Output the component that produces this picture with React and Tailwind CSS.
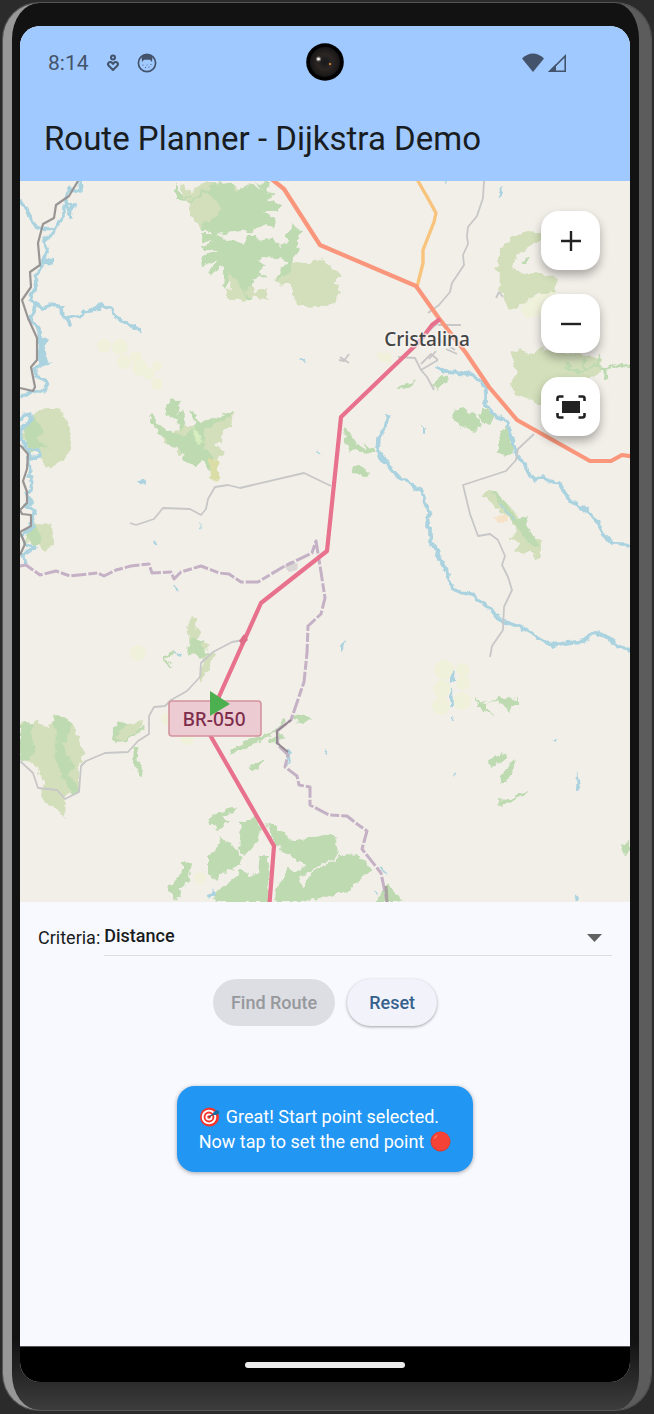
import { useState } from "react";

const FOREST = [
  "M175 182L182 198L196 196L204 192L213 183L232 184L240 200L236 208L243 215L237 225L226 231L215 228L205 231L202 223L214 219L222 210L214 199L206 193L193 197L185 200L175 198Z",
  "M236 190L250 184L262 190L256 183L271 182L265 190L274 194L268 200L280 206L280 211L263 211L274 219L275 226L264 224L250 231L234 233L214 235L200 229L206 222L222 222L235 210L238 199Z",
  "M202 234L214 234L222 237L225 240L235 239L244 246L249 235L256 235L258 240L271 238L281 246L288 241L285 234L293 225L298 230L304 231L297 236L297 245L300 250L293 259L289 274L274 282L288 262L277 258L263 257L259 261L265 267L259 270L265 277L252 279L248 292L240 284L231 270L225 290L222 285L224 269L220 266L211 275L209 273L217 260L202 266L200 258L218 251L203 250L202 246L215 241L203 242Z",
  "M165 406L171 398L180 403L177 414L182 410L186 416L181 432L177 419L167 416Z",
  "M148 417L152 414L157 424L172 432L187 437L191 430L196 424L189 409L194 412L199 423L233 411L230 417L203 429L203 445L213 458L211 475L202 461L196 466L184 460L180 450L170 445L158 431Z",
  "M24 427L34 417L45 432L35 439L51 449L38 446L28 455Z",
  "M25 535L35 525L42 539L36 548Z",
  "M52 720L58 715L71 723L69 739L61 744L75 764L69 774L80 793L73 795L62 777L55 757L57 736Z",
  "M20 724L35 723L30 733L36 747L29 759L20 762Z",
  "M112 728L119 722L129 724L116 736L123 740L114 741Z",
  "M188 644L193 637L206 641L199 647L209 653L200 660L194 652L187 654Z",
  "M162 656L170 651L176 652L166 658L174 668L171 668Z",
  "M134 745L140 748L136 757L143 770L141 777L133 765Z",
  "M451 412L462 407L483 422L473 432L457 424Z",
  "M479 415L487 409L495 417L488 426Z",
  "M499 437L507 425L514 451L505 456L497 453Z",
  "M343 431L346 428L359 446L366 450L364 443L375 452L360 453L355 448L350 453Z",
  "M352 468L357 466L368 471L365 475L353 473Z",
  "M397 388L407 384L417 380L409 388L398 389Z",
  "M434 383L441 376L449 377L437 389Z",
  "M490 491L499 494L507 505L516 518L529 516L526 525L540 546L529 544L510 518Z",
  "M476 696L480 703L486 700L482 705L494 700L498 696L514 700L519 698L519 705L510 705L511 712L507 709L499 700L484 704L495 717L487 711L477 707Z",
  "M488 759L499 757L502 752L508 755L504 761L496 764L491 768Z",
  "M516 759L513 770L506 784L499 784L505 768Z",
  "M498 799L511 800L527 790L528 792L510 804L500 806Z",
  "M621 844L630 841L630 850L624 856Z",
  "M208 820L216 813L240 807L223 817L229 822L218 831Z",
  "M241 823L253 816L258 821L261 837L247 855L239 850Z",
  "M208 855L216 852L221 836L232 845L243 859L236 868L225 871L216 881L208 872Z",
  "M216 892L232 881L240 869L247 871L250 877L258 874L260 855L269 855L268 902L213 902Z",
  "M266 822L296 841L334 833L339 855L317 867L309 872L299 878L309 898L293 902L274 900L275 891L289 870L297 872L307 867L276 847Z",
  "M311 872L345 854L361 855L373 870L357 880L349 891L330 895L301 902L276 902L276 895L302 892Z",
  "M170 886L176 879L182 872L182 863L188 860L192 865L187 883L179 890L181 897L175 901L168 887Z",
  "M377 896L389 884L397 896L403 902L377 902Z",
  "M229 750L245 742L262 736L265 733L268 737L250 746L230 755Z",
  "M248 767L255 763L263 760L257 770L250 768Z",
  "M290 718L300 715L311 718L304 723L293 720Z",
  "M268 740L280 733L285 738L270 743Z",
];

const SCRUB = [
  "M182 183L191 194L204 181L222 184L226 189L235 185L243 198L241 211L251 214L255 222L240 223L225 230L202 230L191 216L190 204L180 197Z",
  "M222 240L229 246L236 263L248 284L255 293L265 286L269 300L253 295L245 301L227 298L226 289L232 288L224 270Z",
  "M292 262L309 263L320 259L342 275L334 282L341 292L333 305L305 307L295 301L290 284L275 283L274 279Z",
  "M500 249L514 236L533 231L541 234L540 240L518 253L510 267L525 275L537 272L557 278L555 292L539 295L522 302L518 310L509 309L499 290L501 280L497 270Z",
  "M509 354L519 348L528 354L541 349L563 352L600 358L601 371L590 378L551 407L527 399L511 389L510 381L518 374Z",
  "M38 410L57 408L65 415L70 431L71 450L64 460L47 468L41 458L30 444L21 437L27 424Z",
  "M30 526L41 523L52 525L53 543L45 552L36 545L24 541Z",
  "M162 436L184 427L202 427L233 412L231 426L223 430L222 442L214 444L225 452L210 464L203 462L193 452L178 455L178 446L164 443Z",
  "M20 723L25 722L30 724L37 720L50 728L53 716L63 717L72 724L76 732L81 743L84 754L79 764L79 788L64 797L65 817L54 808L41 797L42 789L44 783L36 766L20 755Z",
  "M114 731L128 724L143 720L138 732L123 742L112 738Z",
  "M186 627L191 617L197 618L195 625L201 633L195 642L204 641L208 647L204 654L216 654L201 683L199 677L203 659L190 652Z",
  "M480 495L490 489L495 490L497 500L512 507L520 522L528 531L532 542L541 540L541 551L537 561L530 551L515 553L519 542L510 538L518 532L509 517L500 512L492 502Z",
];

const FARM = [
  [104, 346, 7], [120, 347, 8], [124, 362, 7], [136, 357, 6], [140, 368, 8], [149, 374, 6],
  [157, 366, 5], [157, 384, 6], [138, 653, 8], [444, 670, 10], [463, 670, 7], [442, 689, 9],
  [463, 683, 7], [441, 706, 9], [462, 701, 9], [200, 878, 6], [187, 738, 7], [167, 719, 6],
];

const RIVERS = [
  "M80 181L81 192L70 190L65 202L73 205L71 217L67 205L63 208L63 217L55 228L54 234L44 241L47 252L42 266L35 276L36 285L30 300L36 304L31 317L40 333L42 349L46 362L34 369L37 377L47 383L43 391L31 391L20 397",
  "M20 200L27 209L29 216L37 228L56 229",
  "M33 303L42 308L50 305L62 307L63 317L70 324L66 318L83 315L84 311L98 309L103 304L111 309L116 317L129 324L142 332",
  "M20 420L24 415L31 416L28 424L20 428L21 437L27 448L38 451L39 456L31 459L27 452L30 469L27 476L32 477L31 490L27 492L32 502L25 506L35 511L31 523L33 529L21 534L25 544L35 546L29 552L22 553L26 565",
  "M389 414L387 425L379 438L378 452L385 462L399 477L409 480L415 489L420 490L425 503L429 512L427 524L430 531L430 543L436 547L440 560L448 575L452 589L459 592L475 596L481 603L491 608L501 621L521 627L540 638L552 645L566 643L584 641L594 632L605 636L620 647L630 649",
  "M436 366L444 372L456 373L470 374L482 380L486 392L486 406L496 416L508 423L512 439L517 456L526 466L533 480L543 477L551 482L560 484L567 497L576 504L588 511L598 522L604 535L612 544L626 544L630 548",
];

const PONDS = [
  "M54 257L50 259L47 257L43 267L54 264Z", "M39 334L48 340L43 349L44 361L52 364L38 365Z",
  "M497 199L500 190L504 187L503 192Z", "M299 359L305 359L307 362L301 361Z", "M341 647L346 640L344 650L341 652Z",
  "M422 426L425 427L425 434L422 433Z", "M449 681L455 668L454 681L450 683Z", "M450 706L450 693L453 687L454 706Z",
  "M451 714L454 720L451 720Z", "M576 790L577 771L580 788L578 791Z", "M138 479L143 478L145 486L141 484Z",
  "M208 898L213 889L215 893L211 899Z", "M285 753L288 748L292 753L286 767Z", "M574 894L581 902L576 902Z",
  "M552 740L556 739L556 742Z", "M452 774L456 772L452 777Z", "M198 526L201 524L199 529Z", "M154 540L158 543L155 545Z",
  "M324 753L326 749L326 754Z", "M317 449L321 455L318 454Z",
];

const MINOR = [
  "M484 181L483 198L477 216L468 227L467 236L468 244L463 255L464 265L452 283L450 292L439 305L428 313",
  "M534 434L518 449L516 460L506 471L463 485L470 514L478 536L490 534L498 540L505 556L502 565L508 577L512 590L504 607L503 630L492 646L490 657",
  "M130 523L136 525L154 519L163 508L190 509L201 515L206 509L208 499L215 487L228 485L240 488L304 473L331 486",
  "M243 640L232 642L213 652L201 663L200 677L187 691L171 700L165 706L154 707L149 716L149 734L138 741L128 752L105 753L86 761L81 766L79 792L65 799L57 790L38 788L33 773L20 761",
];

const STREETS = [
  "M398 357L415 358L421 370L427 377L434 390M421 364L431 354L438 360M421 370L438 360M429 359L436 351M438 339L455 350M446 349L457 354M438 325L461 325M426 333L438 323",
];

function MapCanvas() {
  return (
    <svg
      className="block h-full w-full"
      viewBox="20 181 610 721"
      preserveAspectRatio="xMidYMid slice"
      role="img"
      aria-label="Map around Cristalina"
    >
      <defs>
        <filter id="terrain" filterUnits="userSpaceOnUse" x="10" y="171" width="630" height="741">
          <feTurbulence type="fractalNoise" baseFrequency="0.14" numOctaves="2" seed="4" result="noise" />
          <feDisplacementMap in="SourceGraphic" in2="noise" scale="8" xChannelSelector="R" yChannelSelector="G" />
          <feGaussianBlur stdDeviation="0.6" />
        </filter>
        <filter id="water" filterUnits="userSpaceOnUse" x="10" y="171" width="630" height="741">
          <feTurbulence type="fractalNoise" baseFrequency="0.12" numOctaves="2" seed="9" result="noise" />
          <feDisplacementMap in="SourceGraphic" in2="noise" scale="7" xChannelSelector="R" yChannelSelector="G" />
          <feGaussianBlur stdDeviation="0.5" />
        </filter>
        <filter id="soft" filterUnits="userSpaceOnUse" x="10" y="171" width="630" height="741">
          <feGaussianBlur stdDeviation="0.5" />
        </filter>
      </defs>
      <rect x="20" y="181" width="610" height="721" fill="#f2efe9" />
      <g fill="#eff1db" filter="url(#soft)">
        {FARM.map(([x, y, r]) => <circle key={`${x}-${y}`} cx={x} cy={y} r={r} />)}
        <path d="M523 302L540 294L556 290L560 312L526 318L520 310ZM376 353L391 353L392 364L380 361Z" />
      </g>
      <g filter="url(#terrain)">
        <g fill="#d3dfbb">{SCRUB.map((d) => <path key={d} d={d} />)}</g>
        <g fill="#bedab1">{FOREST.map((d) => <path key={d} d={d} />)}</g>
        <path d="M520 262L532 257L530 260L523 264Z" fill="#bedab1" />
        <path d="M193 428L198 430L202 442L196 444Z" fill="#d5edbf" />
        <path d="M210 458L219 459L219 480L210 479Z" fill="#dbdda6" />
        <path d="M494 516L508 516L508 521L498 523Z" fill="#f5e2c8" />
        <g fill="none" stroke="#bedab1" strokeWidth="2.5" strokeLinejoin="round">
          <path d="M630 367L617 364L608 369L595 366L580 372L565 367M570 370L567 361M585 370L582 360M596 366L600 354M605 367L606 380" />
          <path d="M125 741L138 732L143 727M134 747L137 760M278 735L276 742M285 720L276 730L268 736" strokeWidth="2" />
          <path d="M230 270L240 284L250 300M205 190L190 202M236 201L220 212" strokeWidth="2" />
        </g>
      </g>
      <g filter="url(#water)">
        <g fill="#aad3df">{PONDS.map((d) => <path key={d} d={d} />)}</g>
        <g fill="none" stroke="#aad3df" strokeWidth="3.6" strokeLinejoin="round">
          {RIVERS.map((d) => <path key={d} d={d} />)}
          <path d="M446 181L446 186M500 503L514 519M173 652L182 655M174 586L176 590M375 891L377 895M381 867L387 874" strokeWidth="1.5" />
        </g>
      </g>
      <g filter="url(#soft)">
        <g fill="none" stroke="#999594" strokeWidth="2.2" strokeLinejoin="round">
          <path d="M78 181L69 196L56 205L54 218L43 224L38 243L40 265L30 272L31 287L22 300L28 318L37 338L37 360L31 367L35 387L33 391L20 388" />
          <path d="M20 445L28 454L27 469L23 481L27 492L27 503L20 510L22 514L31 515L31 526L20 532L25 544L20 555" />
        </g>
        <g fill="none" stroke="#c8c7c7" strokeWidth="1.8" strokeLinejoin="round">
          {MINOR.map((d) => <path key={d} d={d} />)}
          {STREETS.map((d) => <path key={d} d={d} />)}
          <path d="M339 360L344 361L349 354M340 357L349 363M496 298L499 292L503 297" />
        </g>
        <path d="M284 566L290 561L298 564L297 570L289 572Z" fill="#d9d6d4" />
        <g fill="none" stroke="#c5b1c5" strokeWidth="3" strokeLinejoin="round">
          <path d="M20 566L26 565L40 575L56 571L70 576L98 573L104 576L116 570L131 566L149 564L152 573L171 572L174 579L181 572L201 566L219 573L229 574L241 582L258 582L283 567L312 553L316 541L321 572L325 598L321 614L308 626L307 653L304 682L291 720L277 731L278 745L288 755L285 767L297 776L299 785L310 787L310 805L329 815L347 816L357 824L367 831L362 849L381 873L387 902" strokeDasharray="15 2 9 2" />
          <path d="M291 720L277 731L277 743L288 752" stroke="#93888f" strokeWidth="2" />
          <path d="M386 886L387 902" stroke="#a8a39f" />
        </g>
        <g fill="none" strokeLinejoin="round">
          <path d="M418 175L418 181L430 202L436 213L434 222L423 250L423 263L420 275L417 287" stroke="#f8c47d" strokeWidth="3.4" />
          <path d="M266 175L274 181L284 189L320 245L416 286L438 317L466 353L489 387L517 420L590 461L611 461L622 455L636 457" stroke="#f9967b" strokeWidth="4.2" />
          <path d="M440 319L432 325L420 341L341 417L327 551L261 603L213 710L210 735L274 846L269 910" stroke="#e8718d" strokeWidth="4.2" />
        </g>
        <path d="M244 634L248 640L242 645L239 641Z" fill="#de6d88" />
      </g>
      <text x="427" y="346" textAnchor="middle" fontFamily="Noto Sans, sans-serif" fontSize="19" fontWeight="500" fill="#444" stroke="#f7f5f2" strokeOpacity="0.75" strokeWidth="3" paintOrder="stroke">Cristalina</text>
      <rect x="169" y="701" width="92" height="35" rx="3" fill="#eccbd2" stroke="#d4949f" strokeWidth="1.6" />
      <text x="214" y="726" textAnchor="middle" fontFamily="Noto Sans, sans-serif" fontSize="19" fontWeight="500" fill="#7d2c4b">BR-050</text>
      <path d="M210 691L230 704L210 716Z" fill="#4caf50" />
    </svg>
  );
}

function MapButton({ label, children }) {
  return (
    <button
      type="button"
      aria-label={label}
      className="flex size-[59px] items-center justify-center rounded-[18px] bg-white text-[#222] shadow-[0_5px_10px_rgba(0,0,0,0.3)]"
    >
      {children}
    </button>
  );
}

function StatusBar() {
  return (
    <div className="flex h-[74px] items-center gap-4 pl-7 pr-16 text-[#43536b]">
      <span className="text-[21px] leading-6">8:14</span>
      <svg className="h-5 w-4" viewBox="0 0 16 20" fill="none" stroke="currentColor" strokeWidth="2" aria-hidden="true">
        <circle cx="8" cy="4.500" r="2" />
        <path d="M8 17L4 13Q2.300 11.300 3.500 9.800Q5.800 7.700 8 11Q10.200 7.700 12.500 9.800Q13.700 11.300 12 13Z" strokeLinejoin="round" />
      </svg>
      <svg className="size-5" viewBox="0 0 20 20" aria-hidden="true">
        <circle cx="10" cy="10" r="8.600" fill="none" stroke="currentColor" strokeWidth="1.700" />
        <path d="M4.500 3.500Q10 -1 15.500 3.500L15 9L13 6.800H7L5 9Z" fill="currentColor" />
        <g fill="currentColor">
          <circle cx="6" cy="12" r=".6" /><circle cx="8.500" cy="14.500" r=".6" /><circle cx="12" cy="14" r=".6" />
          <circle cx="14" cy="11.500" r=".6" /><circle cx="10" cy="12" r=".5" />
        </g>
      </svg>
      <span className="flex flex-1 justify-end gap-1">
        <svg className="h-5 w-[22px]" viewBox="0 0 22 20" fill="currentColor" aria-hidden="true">
          <path d="M11 19L0 5.500Q11-4.500 22 5.500Z" />
        </svg>
        <svg className="h-5 w-[18px]" viewBox="0 0 18 20" aria-hidden="true">
          <path d="M2 18.200L17.200 3V18.200Z" fill="none" stroke="currentColor" strokeWidth="1.600" />
          <path d="M0 19L8 11V19Z" fill="currentColor" />
        </svg>
      </span>
    </div>
  );
}

function Camera() {
  return (
    <div className="absolute left-1/2 top-[17px] -translate-x-1/2" aria-hidden="true">
      <svg className="size-[38px]" viewBox="0 0 38 38">
        <defs>
          <radialGradient id="lens">
            <stop offset="0" stopColor="#15181b" />
            <stop offset="0.5" stopColor="#2c2624" />
            <stop offset="1" stopColor="#171616" />
          </radialGradient>
        </defs>
        <circle cx="19" cy="19" r="18.800" fill="#020202" />
        <circle cx="19" cy="19" r="15" fill="url(#lens)" />
        <circle cx="12.500" cy="16" r="2.500" fill="#77716b" />
        <circle cx="12.500" cy="16" r="1.300" fill="#fff" />
        <circle cx="24" cy="21" r="1.200" fill="#c17a38" />
      </svg>
    </div>
  );
}

function TargetIcon() {
  return (
    <svg className="size-[21px]" viewBox="0 0 21 21" role="img" aria-label="Target">
      <circle cx="10.500" cy="11" r="9.500" fill="#f6342c" />
      <circle cx="10" cy="11" r="7.300" fill="#fff" />
      <circle cx="10" cy="11" r="5.400" fill="#f6342c" />
      <circle cx="10" cy="11" r="3.500" fill="#fff" />
      <circle cx="10" cy="11" r="1.800" fill="#f6342c" />
      <path d="M10 11L16 7" stroke="#394d5c" strokeWidth="1.300" />
      <path d="M14 7L17 4L20 5L20.500 7L17 9L14.500 9Z" fill="#176da5" />
    </svg>
  );
}

function RedCircleIcon() {
  return (
    <svg className="size-[21px]" viewBox="0 0 21 21" role="img" aria-label="Red circle">
      <circle cx="10.500" cy="10.500" r="10" fill="#d93b30" />
      <circle cx="10.800" cy="10" r="9.200" fill="#f44336" />
      <path d="M3.500 8Q4.500 4.500 7.500 3.500Q7 6.500 3.500 8Z" fill="#ff7c70" />
    </svg>
  );
}

export default function App() {
  const [criteria, setCriteria] = useState("Distance");
  return (
    <div className="flex min-h-screen flex-col bg-[#2b2b2b] px-[3px] pb-1 pt-[3px] font-[Roboto,sans-serif]">
      <div className="flex flex-1 flex-col rounded-[36px] border-l-[9px] border-r-[12px] border-l-[#989898] border-r-[#5c5c5c] bg-linear-to-b from-[#121212] from-95% to-[#3d3d3d] pb-7 pl-2 pr-[9px] pt-[23px] shadow-[0_0_0_1px_#555]">
        <div className="relative flex flex-1 flex-col overflow-hidden rounded-[20px] bg-[#f8f9ff]">
          <header className="bg-[#a0c9ff]">
            <StatusBar />
            <h1 className="flex h-[81px] items-center px-6 pb-1 text-[33px] leading-10 text-[#191c20]">
              Route Planner - Dijkstra Demo
            </h1>
            <Camera />
          </header>

          <section className="relative aspect-[610/721] w-full" aria-label="Map">
            <MapCanvas />
            <div className="absolute right-[30px] top-[30px] flex flex-col gap-6">
              <MapButton label="Zoom in">
                <svg className="size-6" viewBox="0 0 24 24" stroke="currentColor" strokeWidth="2.400" aria-hidden="true"><path d="M2 12H22M12 2V22" /></svg>
              </MapButton>
              <MapButton label="Zoom out">
                <svg className="size-6" viewBox="0 0 24 24" stroke="currentColor" strokeWidth="2.400" aria-hidden="true"><path d="M2 12H22" /></svg>
              </MapButton>
              <MapButton label="Fit to screen">
                <svg className="h-6 w-[30px]" viewBox="0 0 30 24" aria-hidden="true">
                  <path d="M1.500 6V3.500Q1.500 1.500 3.500 1.500H7.500M22.500 1.500H26.500Q28.500 1.500 28.500 3.500V6M28.500 18V20.500Q28.500 22.500 26.500 22.500H22.500M7.500 22.500H3.500Q1.500 22.500 1.500 20.500V18" fill="none" stroke="currentColor" strokeWidth="2.600" />
                  <rect x="6" y="6" width="18" height="12" fill="currentColor" />
                </svg>
              </MapButton>
            </div>
          </section>

          <main className="flex flex-1 flex-col items-center px-[18px] pt-[18px]">
            <div className="flex w-full items-center gap-1 text-[18px] leading-6 text-[#191c20]">
              <label htmlFor="criteria">Criteria:</label>
              <div className="relative flex-1 border-b border-[#dcdde2]">
                <select
                  id="criteria"
                  value={criteria}
                  onChange={(event) => setCriteria(event.target.value)}
                  className="block h-[35px] w-full appearance-none bg-transparent pb-1 font-medium outline-none"
                >
                  <option>Distance</option>
                  <option>Time</option>
                </select>
                <svg className="pointer-events-none absolute right-[10px] top-[14px] h-2 w-[15px]" viewBox="0 0 15 8" fill="#616161" aria-hidden="true">
                  <path d="M0 0H15L7.500 8Z" />
                </svg>
              </div>
            </div>

            <div className="mt-[23px] flex gap-3 text-[18px] font-medium leading-6">
              <button type="button" disabled className="h-[47px] rounded-full bg-[#dddee3] px-[18px] text-[#96989c]">
                Find Route
              </button>
              <button type="button" className="h-[47px] rounded-full bg-[#f2f3fa] px-[22px] text-[#36618e] shadow-[0_1px_3px_rgba(0,0,0,0.35)]">
                Reset
              </button>
            </div>

            <div role="status" className="mt-[60px] rounded-[18px] bg-[#2196f3] px-[22px] py-[18px] text-[18px] leading-[25px] text-white shadow-[0_1px_4px_rgba(0,0,0,0.35)]">
              <p className="flex items-center gap-[6px]"><TargetIcon />Great! Start point selected.</p>
              <p className="flex items-center gap-[6px]">Now tap to set the end point<RedCircleIcon /></p>
            </div>
          </main>

          <footer className="flex h-9 items-center justify-center border-t border-[#555] bg-black">
            <div className="h-[6px] w-40 rounded-full bg-[#ececec]" />
          </footer>
        </div>
      </div>
    </div>
  );
}
